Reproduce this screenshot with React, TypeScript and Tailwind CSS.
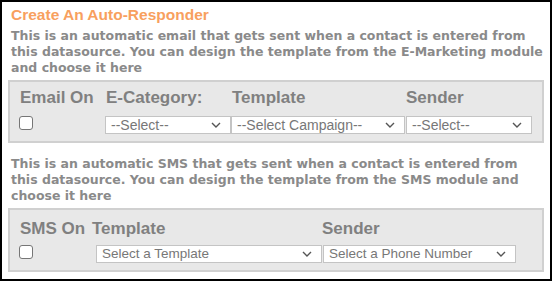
import React from "react";

const Chevron = () => (
  <svg width="10" height="6" viewBox="0 0 10 6" className="shrink-0">
    <path d="M1 1l4 4 4-4" fill="none" stroke="#555555" strokeWidth="1.4" />
  </svg>
);

const FakeSelect = ({ label, className, text }: { label: string; className: string; text: string }) => (
  <div
    className={
      "h-[18px] border border-[#c4c4c4] bg-white flex items-center justify-between pl-[5px] pr-[9px] text-[#777777] leading-none " +
      className +
      " " +
      text
    }
  >
    <span className="whitespace-nowrap">{label}</span>
    <Chevron />
  </div>
);

const Box = () => (
  <div className="w-[14px] h-[14px] rounded-[3px] border border-[#767676] bg-white" />
);

export default function App() {
  return (
    <div
      className="w-[552px] h-[281px] border-2 border-black bg-white px-[6px] pt-[3px]"
      style={{ fontFamily: '"Liberation Sans", Arial, sans-serif' }}
    >
      <div className="pl-[3px] text-[15.5px] leading-[20px] font-bold text-[#f8a05e]">Create An Auto-Responder</div>
      <div
        className="mt-[3px] pl-[3px] text-[12.5px] leading-[16px] font-bold text-[#8a8a8a]"
        style={{ fontFamily: '"DejaVu Sans", Verdana, sans-serif' }}
      >
        <div className="whitespace-nowrap">This is an automatic email that gets sent when a contact is entered from</div>
        <div className="whitespace-nowrap">this datasource. You can design the template from the E-Marketing module</div>
        <div className="whitespace-nowrap">and choose it here</div>
      </div>

      <div className="mt-[4px] w-[536px] border-2 border-[#d0d0d0] bg-[#e8e8e8] pl-[10px] pt-[6px] pb-[7px]">
        <div className="grid grid-cols-[85px_126px_175px_126px] text-[17px] leading-[20px] font-bold text-[#808080]">
          <div>Email On</div>
          <div className="pl-[1px]">E-Category:</div>
          <div className="pl-[1px]">Template</div>
          <div>Sender</div>
        </div>
        <div className="mt-[8px] grid grid-cols-[85px_126px_175px_126px] items-start">
          <div className="-ml-[1px]">
            <Box />
          </div>
          <FakeSelect label="--Select--" className="w-[126px]" text="text-[14px]" />
          <FakeSelect label="--Select Campaign--" className="w-[174px]" text="text-[14px]" />
          <FakeSelect label="--Select--" className="w-[126px]" text="text-[14px]" />
        </div>
      </div>

      <div
        className="mt-[13px] pl-[3px] text-[12.5px] leading-[16px] font-bold text-[#8a8a8a]"
        style={{ fontFamily: '"DejaVu Sans", Verdana, sans-serif' }}
      >
        <div className="whitespace-nowrap">This is an automatic SMS that gets sent when a contact is entered from</div>
        <div className="whitespace-nowrap">this datasource. You can design the template from the SMS module and</div>
        <div className="whitespace-nowrap">choose it here</div>
      </div>

      <div className="mt-[4px] w-[536px] border-2 border-[#d0d0d0] bg-[#e8e8e8] pl-[10px] pt-[9px] pb-[7px]">
        <div className="grid grid-cols-[72px_230px_194px] text-[17px] leading-[20px] font-bold text-[#808080]">
          <div>SMS On</div>
          <div>Template</div>
          <div>Sender</div>
        </div>
        <div className="mt-[6px] grid grid-cols-[72px_230px_194px] items-start">
          <div className="-ml-[1px]">
            <Box />
          </div>
          <FakeSelect label="Select a Template" className="ml-[4px] w-[226px]" text="text-[13.5px]" />
          <FakeSelect label="Select a Phone Number" className="ml-[1px] w-[193px]" text="text-[13.5px]" />
        </div>
      </div>
    </div>
  );
}
